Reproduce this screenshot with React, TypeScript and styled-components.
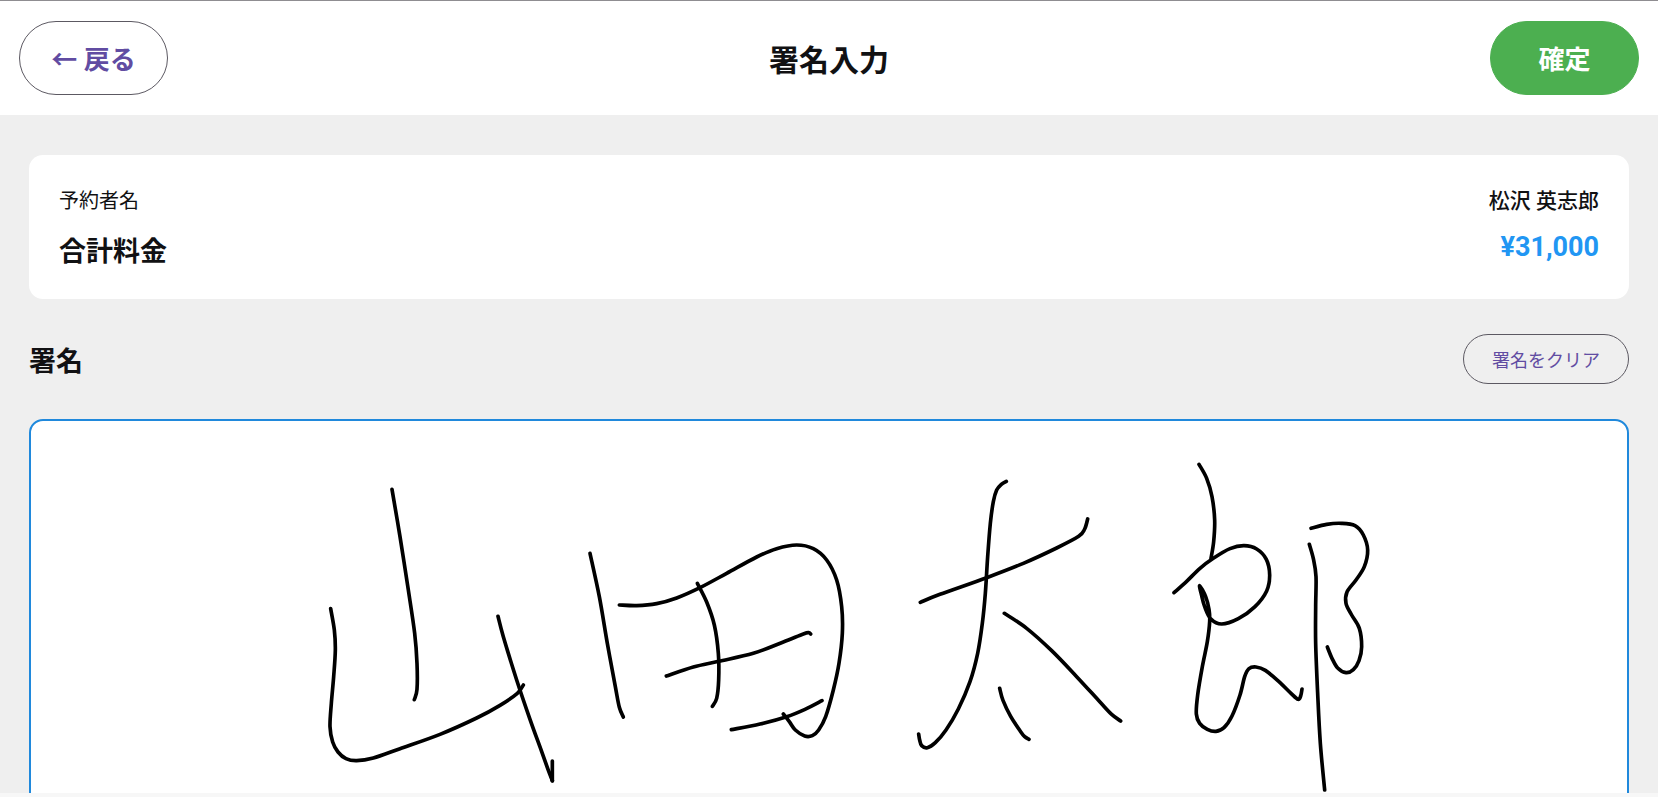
import React from "react";
import styled, { createGlobalStyle } from "styled-components";

const GlobalStyle = createGlobalStyle`
  *, *::before, *::after { box-sizing: border-box; }
  body {
    margin: 0;
    background: #f7f7f7;
    color: #111113;
    font-family: Roboto, "Noto Sans CJK JP", sans-serif;
  }
  h1, h2, dl, dt, dd { margin: 0; }
`;

const Screen = styled.div`
  display: flex;
  flex-direction: column;
  height: 100vh;
  padding-bottom: 4px;
  overflow: hidden;
`;

const Header = styled.header`
  display: grid;
  grid-template-columns: 1fr auto 1fr;
  align-items: center;
  flex: none;
  padding: 20px 19px;
  border-top: 1px solid #8f8d91;
  background: #ffffff;
`;

const Title = styled.h1`
  padding-top: 6px;
  font-size: 30px;
  line-height: 40px;
  font-weight: 700;
`;

const PillButton = styled.button<{ $tone: "outline" | "confirm"; $small?: boolean }>`
  height: ${(p) => (p.$small ? 50 : 74)}px;
  min-width: ${(p) => (p.$small ? 166 : 149)}px;
  padding: 3px 28px 0;
  border: 1px solid ${(p) => (p.$tone === "confirm" ? "#4caf50" : "#5c5962")};
  border-radius: 40px;
  background: ${(p) => (p.$tone === "confirm" ? "#4caf50" : "transparent")};
  color: ${(p) => (p.$tone === "confirm" ? "#ffffff" : "#614ca2")};
  font-family: inherit;
  font-size: ${(p) => (p.$small ? 18 : 26)}px;
  font-weight: ${(p) => (p.$small ? 400 : 700)};
  line-height: 1;
  white-space: nowrap;
  cursor: pointer;
`;

const HeaderEnd = styled.div`
  display: flex;
  justify-content: flex-end;
`;

const Content = styled.main`
  display: flex;
  flex-direction: column;
  flex: 1;
  min-height: 0;
  padding: 40px 29px 0;
  overflow: hidden;
  background: #efefef;
`;

const SummaryCard = styled.dl`
  display: flex;
  flex-direction: column;
  flex: none;
  gap: 12px;
  padding: 30px 30px 24px;
  border-radius: 14px;
  background: #ffffff;
`;

const SummaryRow = styled.div`
  display: flex;
  justify-content: space-between;
`;

const Label = styled.dt<{ $strong?: boolean }>`
  font-size: ${(p) => (p.$strong ? 27 : 20)}px;
  line-height: ${(p) => (p.$strong ? 46 : 32)}px;
  font-weight: ${(p) => (p.$strong ? 700 : 400)};
`;

const GuestName = styled.dd`
  font-size: 21px;
  line-height: 32px;
  font-weight: 500;
`;

const Price = styled.dd`
  color: #2196f3;
  font-size: 27px;
  line-height: 36px;
  font-weight: 700;
`;

const SectionHead = styled.div`
  display: flex;
  align-items: center;
  justify-content: space-between;
  flex: none;
  padding: 35px 0;
`;

const SectionTitle = styled.h2`
  padding-top: 6px;
  font-size: 27px;
  line-height: 40px;
  font-weight: 700;
`;

const SignaturePad = styled.section`
  display: flex;
  justify-content: center;
  flex: none;
  height: 460px;
  border: 2px solid #2089dc;
  border-radius: 14px;
  overflow: hidden;
  background: #ffffff;
`;

const Ink = styled.svg`
  flex: none;
  fill: none;
  stroke: #000000;
  stroke-width: 11;
  stroke-linecap: round;
  stroke-linejoin: round;
`;

type Point = [number, number];

interface Glyph {
  x: number;
  y: number;
  strokes: Point[][];
}

// Pen samples, three units to the pixel, relative to the origin of each character.
const signature: Glyph[] = [
  {
    x: 300,
    y: 460,
    strokes: [
      [[92, 446], [103, 510], [106, 570], [101, 650], [94, 730], [90, 800], [98, 846], [114, 876], [138, 896], [170, 902], [220, 894], [300, 866], [420, 823], [530, 774], [600, 736], [652, 700], [670, 675]],
      [[276, 88], [300, 230], [325, 390], [344, 520], [351, 610], [351, 688], [343, 719]],
      [[594, 469], [610, 530], [650, 660], [690, 778], [724, 872], [744, 928], [757, 962]],
      [[757, 962], [757, 903]],
      [[752, 940], [757, 962]],
    ],
  },
  {
    x: 560,
    y: 520,
    strokes: [
      [[90, 100], [118, 230], [142, 370], [166, 500], [178, 562], [190, 591]],
      [[178, 255], [230, 257], [290, 251], [350, 234], [420, 203], [500, 160], [590, 111], [650, 86], [710, 75], [760, 86], [800, 120], [830, 180], [845, 260], [847, 340], [837, 430], [820, 510], [797, 590], [776, 630], [757, 647], [734, 648], [706, 630], [688, 605], [670, 582]],
      [[412, 190], [440, 246], [463, 315], [475, 400], [476, 480], [470, 535], [457, 559]],
      [[319, 468], [400, 441], [476, 424], [580, 400], [670, 366], [730, 342], [746, 338], [752, 342]],
      [[514, 629], [600, 612], [680, 590], [735, 568], [786, 542]],
    ],
  },
  {
    x: 890,
    y: 460,
    strokes: [
      [[349, 64], [334, 73], [320, 90], [310, 125], [301, 190], [293, 290], [286, 400], [277, 490], [263, 580], [240, 665], [205, 747], [168, 810], [136, 848], [112, 863], [95, 857], [89, 840], [86, 822]],
      [[91, 427], [150, 403], [290, 353], [400, 310], [500, 264], [566, 229], [584, 207], [593, 177]],
      [[343, 460], [410, 505], [485, 572], [560, 650], [630, 726], [665, 763], [692, 783]],
      [[329, 685], [339, 721], [362, 769], [392, 815], [404, 830], [417, 838]],
    ],
  },
  {
    x: 1150,
    y: 440,
    strokes: [
      [[147, 73], [170, 115], [186, 170], [194, 240], [191, 305], [183, 355]],
      [[72, 458], [110, 424], [150, 385], [190, 355], [240, 326], [282, 317], [320, 327], [349, 358], [359, 405], [350, 453], [315, 500], [265, 536], [215, 552], [182, 536], [164, 500], [155, 467], [149, 437], [167, 470], [177, 508], [179, 545], [172, 605], [157, 680], [143, 765], [139, 822], [149, 850], [172, 868], [198, 874], [222, 863], [246, 828], [270, 765], [284, 710], [297, 686], [318, 681], [346, 691], [386, 724], [423, 760], [444, 778], [452, 768], [456, 747]],
      [[483, 265], [530, 253], [575, 250], [615, 257], [640, 285], [653, 330], [643, 380], [618, 420], [591, 456], [588, 490], [605, 525], [628, 565], [635, 620], [627, 662], [610, 689], [588, 698], [563, 684], [546, 655], [532, 621]],
      [[478, 313], [490, 356], [498, 410], [497, 500], [497, 610], [503, 760], [511, 910], [524, 1050]],
    ],
  },
];

// Passes a Catmull-Rom spline through the sampled points.
function smooth(points: Point[]): string {
  let d = `M${points[0][0]} ${points[0][1]}`;
  for (let i = 0; i < points.length - 1; i++) {
    const a = points[Math.max(i - 1, 0)];
    const b = points[i];
    const c = points[i + 1];
    const e = points[Math.min(i + 2, points.length - 1)];
    d += ` C${b[0] + (c[0] - a[0]) / 6} ${b[1] + (c[1] - a[1]) / 6} ${c[0] - (e[0] - b[0]) / 6} ${c[1] - (e[1] - b[1]) / 6} ${c[0]} ${c[1]}`;
  }
  return d;
}

export default function App() {
  return (
    <>
      <GlobalStyle />
      <Screen>
        <Header>
          <div>
            <PillButton type="button" $tone="outline">← 戻る</PillButton>
          </div>
          <Title>署名入力</Title>
          <HeaderEnd>
            <PillButton type="button" $tone="confirm">確定</PillButton>
          </HeaderEnd>
        </Header>
        <Content>
          <SummaryCard>
            <SummaryRow>
              <Label>予約者名</Label>
              <GuestName>松沢 英志郎</GuestName>
            </SummaryRow>
            <SummaryRow>
              <Label $strong>合計料金</Label>
              <Price>¥31,000</Price>
            </SummaryRow>
          </SummaryCard>
          <SectionHead>
            <SectionTitle>署名</SectionTitle>
            <PillButton type="button" $tone="outline" $small>署名をクリア</PillButton>
          </SectionHead>
          <SignaturePad aria-label="署名">
            <Ink width="1100" height="456" viewBox="279 421 1100 456" aria-hidden="true">
              {signature.map((glyph) => (
                <g key={glyph.x} transform={`translate(${glyph.x} ${glyph.y}) scale(${1 / 3})`}>
                  {glyph.strokes.map((points, i) => (
                    <path key={i} d={smooth(points)} />
                  ))}
                </g>
              ))}
            </Ink>
          </SignaturePad>
        </Content>
      </Screen>
    </>
  );
}
